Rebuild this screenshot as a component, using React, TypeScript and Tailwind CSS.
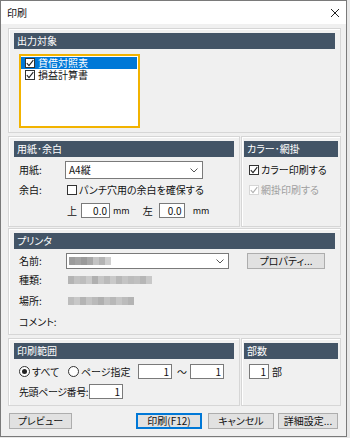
import React from "react";

type Kids = { children?: React.ReactNode };

function Check({ disabled = false }: { disabled?: boolean }) {
  return (
    <span
      className={`inline-flex h-[10px] w-[10px] shrink-0 items-center justify-center border bg-white ${
        disabled ? "border-[#d6d6d6]" : "border-[#333333]"
      }`}
    >
      <svg width="8" height="8" viewBox="0 0 8 8">
        <path d="M0.8 4.2 L3 6.6 L7.3 1.2" fill="none" stroke={disabled ? "#b0b0b0" : "#222"} strokeWidth="1.1" />
      </svg>
    </span>
  );
}

function Radio({ on = false }: { on?: boolean }) {
  return (
    <span className="inline-flex h-[11px] w-[11px] shrink-0 items-center justify-center rounded-full border border-[#333333] bg-white">
      {on && <span className="h-[5px] w-[5px] rounded-full bg-[#222]" />}
    </span>
  );
}

function Chevron() {
  return (
    <svg width="8" height="5" viewBox="0 0 8 5" className="shrink-0">
      <path d="M0.5 0.5 L4 4 L7.5 0.5" fill="none" stroke="#555" strokeWidth="1" />
    </svg>
  );
}

function Num({ value, w }: { value: string; w: string }) {
  return (
    <span className={`flex h-[15px] ${w} shrink-0 items-center justify-end border border-[#7a7a7a] bg-white pr-[2px] text-[10px]`}>
      {value}
    </span>
  );
}

function Group({ title, className = "", children }: Kids & { title: string; className?: string }) {
  return (
    <div className={`flex flex-col border border-[#d6d6d6] pt-[4px] shadow-[inset_1px_1px_0_#ffffff] ${className}`}>
      <div className="flex h-[16px] shrink-0 items-center bg-[#435466] pl-[3px] text-white">{title}</div>
      {children}
    </div>
  );
}

function Btn({ label, main = false, w }: { label: string; main?: boolean; w: string }) {
  return (
    <button
      className={`flex h-[16px] ${w} items-center justify-center border bg-[#e1e1e1] text-[10px] ${
        main ? "border-[#0078d7] shadow-[inset_0_0_0_1px_#0078d7]" : "border-[#adadad]"
      }`}
    >
      {label}
    </button>
  );
}

// pixelated gray mosaic standing in for blurred printer info
function Blur({ cells }: { cells: string[] }) {
  return (
    <span className="flex h-[8px] blur-[0.6px]">
      {cells.map((c, i) => (
        <span key={i} className="h-full w-[6px]" style={{ background: c }} />
      ))}
    </span>
  );
}

export default function App() {
  return (
    <div className="h-[438px] w-[350px] bg-[#e8e8e8] font-['Noto_Sans_CJK_JP',sans-serif] text-[10px] leading-none whitespace-nowrap text-[#111] [font-feature-settings:'palt']">
      <div className="flex h-[437px] w-[347px] flex-col border border-[#7a7a7a] bg-[#f0f0f0]">
        {/* title bar */}
        <div className="flex h-[23px] shrink-0 items-center justify-between bg-white pl-[6px] pr-[6px]">
          <span>印刷</span>
          <svg width="10" height="10" viewBox="0 0 10 10">
            <path d="M1 1 L9 9 M9 1 L1 9" stroke="#222" strokeWidth="1" />
          </svg>
        </div>

        <div className="flex flex-col pl-[7px] pr-[5px] pt-[4px]">
          {/* 出力対象 */}
          <Group title="出力対象" className="h-[105px] px-[5px]">
            <div className="ml-[5px] mt-[5px] flex h-[74px] w-[121px] flex-col border-2 border-[#f2b300] bg-white pt-[1px]">
              <div className="mr-[1px] flex h-[12px] items-center gap-[3px] bg-[#0078d7] pl-[4px] text-white">
                <Check />
                <span>貸借対照表</span>
              </div>
              <div className="flex h-[12px] items-center gap-[3px] pl-[4px]">
                <Check />
                <span>損益計算書</span>
              </div>
            </div>
          </Group>

          {/* 用紙・余白 / カラー・網掛 */}
          <div className="mt-[3px] flex h-[91px] gap-[1px]">
            <Group title="用紙･余白" className="w-[232px] px-[5px]">
              <div className="mt-[4px] flex h-[18px] items-center pl-[5px]">
                <span className="w-[46px]">用紙:</span>
                <span className="flex h-[18px] w-[138px] items-center justify-between border border-[#7a7a7a] bg-white pl-[3px] pr-[4px]">
                  <span>A4縦</span>
                  <Chevron />
                </span>
              </div>
              <div className="mt-[4px] flex h-[14px] items-center pl-[5px]">
                <span className="w-[48px]">余白:</span>
                <span className="h-[10px] w-[10px] border border-[#333333] bg-white" />
                <span className="ml-[2px]">パンチ穴用の余白を確保する</span>
              </div>
              <div className="mt-[6px] flex h-[15px] items-center pl-[53px]">
                <span className="w-[14px]">上</span>
                <Num value="0.0" w="w-[29px]" />
                <span className="ml-[3px] text-[9px]">mm</span>
                <span className="ml-[13px] w-[16px]">左</span>
                <Num value="0.0" w="w-[26px]" />
                <span className="ml-[8px] text-[9px]">mm</span>
              </div>
            </Group>
            <Group title="カラー･網掛" className="w-[100px] px-[2px]">
              <div className="mt-[4px] flex h-[18px] items-center gap-[2px] pl-[5px]">
                <Check />
                <span>カラー印刷する</span>
              </div>
              <div className="mt-[4px] flex h-[14px] items-center gap-[2px] pl-[5px] text-[#a0a0a0]">
                <Check disabled />
                <span>網掛印刷する</span>
              </div>
            </Group>
          </div>

          {/* プリンタ */}
          <Group title="プリンタ" className="mt-[1px] h-[107px] px-[5px]">
            <div className="mt-[4px] flex h-[16px] items-center pl-[5px]">
              <span className="w-[47px]">名前:</span>
              <span className="flex h-[16px] w-[163px] items-center justify-between border border-[#7a7a7a] bg-white pl-[2px] pr-[4px]">
                <Blur cells={["#9c9c9c", "#a4a4a4", "#9a9a9a", "#a8a8a8", "#c4c4c4", "#b4b4b4", "#cfcfcf"]} />
                <Chevron />
              </span>
              <span className="ml-[18px]">
                <Btn label="プロパティ..." w="w-[78px]" />
              </span>
            </div>
            <div className="mt-[4px] flex h-[14px] items-center pl-[5px]">
              <span className="w-[49px]">種類:</span>
              <Blur cells={["#b4b4b4", "#c2c2c2", "#bdbdbd", "#cacaca", "#b0b0b0", "#c6c6c6", "#bababa", "#c9c9c9", "#b8b8b8", "#c4c4c4", "#bcbcbc", "#c0c0c0", "#b6b6b6", "#c8c8c8"]} />
            </div>
            <div className="mt-[7px] flex h-[14px] items-center pl-[5px]">
              <span className="w-[49px]">場所:</span>
              <Blur cells={["#bdbdbd", "#c8c8c8", "#b4b4b4", "#c4c4c4", "#bababa", "#b0b0b0", "#c2c2c2", "#b8b8b8", "#c6c6c6", "#bcbcbc", "#b4b4b4"]} />
            </div>
            <div className="mt-[7px] flex h-[14px] items-center pl-[5px]">
              <span>コメント:</span>
            </div>
          </Group>

          {/* 印刷範囲 / 部数 */}
          <div className="mt-[3px] flex h-[68px] gap-[1px]">
            <Group title="印刷範囲" className="w-[232px] px-[5px]">
              <div className="mt-[5px] flex h-[15px] items-center pl-[5px]">
                <Radio on />
                <span className="ml-[2px] w-[36px]">すべて</span>
                <Radio />
                <span className="ml-[2px] w-[57px]">ページ指定</span>
                <Num value="1" w="w-[34px]" />
                <span className="ml-[5px] w-[13px]">〜</span>
                <Num value="1" w="w-[34px]" />
              </div>
              <div className="mt-[5px] flex h-[15px] items-center pl-[5px]">
                <span className="w-[70px] tracking-[-0.4px]">先頭ページ番号:</span>
                <Num value="1" w="w-[34px]" />
              </div>
            </Group>
            <Group title="部数" className="w-[100px] px-[2px]">
              <div className="mt-[5px] flex h-[15px] items-center pl-[5px]">
                <Num value="1" w="w-[20px]" />
                <span className="ml-[3px]">部</span>
              </div>
            </Group>
          </div>

          {/* buttons */}
          <div className="mt-[7px] flex items-center pl-[1px]">
            <Btn label="プレビュー" w="w-[63px]" />
            <span className="ml-[64px]">
              <Btn label="印刷(F12)" main w="w-[66px]" />
            </span>
            <span className="ml-[6px]">
              <Btn label="キャンセル" w="w-[66px]" />
            </span>
            <span className="ml-[4px]">
              <Btn label="詳細設定..." w="w-[60px]" />
            </span>
          </div>
        </div>
      </div>
    </div>
  );
}
